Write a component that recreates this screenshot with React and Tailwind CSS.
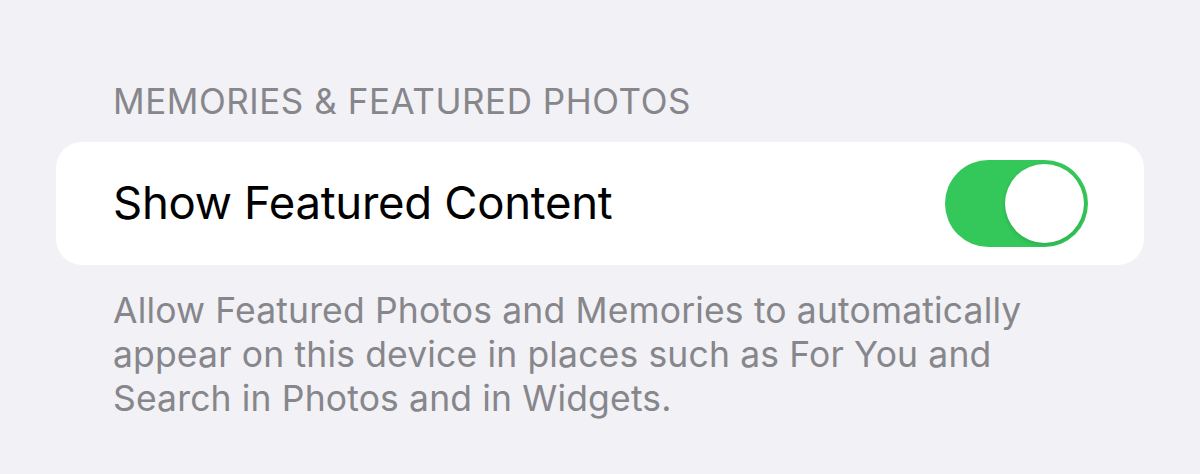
import React, { useState } from 'react';

function Toggle({ on, onChange }) {
    return (
        <button
            type="button"
            onClick={() => onChange(!on)}
            className={`w-[143px] h-[87px] rounded-full p-[4px] flex items-center shrink-0 ${on ? 'bg-[#34c759] justify-end' : 'bg-[#e9e9ea] justify-start'}`}
        >
            <span className="block w-[79px] h-[79px] rounded-full bg-white shadow-[0_2px_4px_rgba(0,0,0,0.12)]" />
        </button>
    );
}

export default function App() {
    const [featured, setFeatured] = useState(true);

    return (
        <div className="w-[1200px] h-[474px] bg-[#f1f1f6] font-['Inter',sans-serif] overflow-hidden">
            <div className="pt-[84px] px-[56px]">
                <div className="pl-[57px] text-[35px] leading-[34px] text-[#86868b] tracking-[0.55px]">
                    MEMORIES &amp; FEATURED PHOTOS
                </div>

                <div className="mt-[24px] bg-white rounded-[26px] h-[123px] w-[1088px] flex items-center justify-between pl-[57px] pr-[56px]">
                    <span className="text-[45.5px] text-black tracking-[-0.3px]">Show Featured Content</span>
                    <Toggle on={featured} onChange={setFeatured} />
                </div>

                <p className="mt-[24px] pl-[57px] text-[35.5px] leading-[44px] text-[#86868b] tracking-[0.15px]">
                    <span className="block">Allow Featured Photos and Memories to automatically</span>
                    <span className="block">appear on this device in places such as For You and</span>
                    <span className="block">Search in Photos and in Widgets.</span>
                </p>
            </div>
        </div>
    );
}
